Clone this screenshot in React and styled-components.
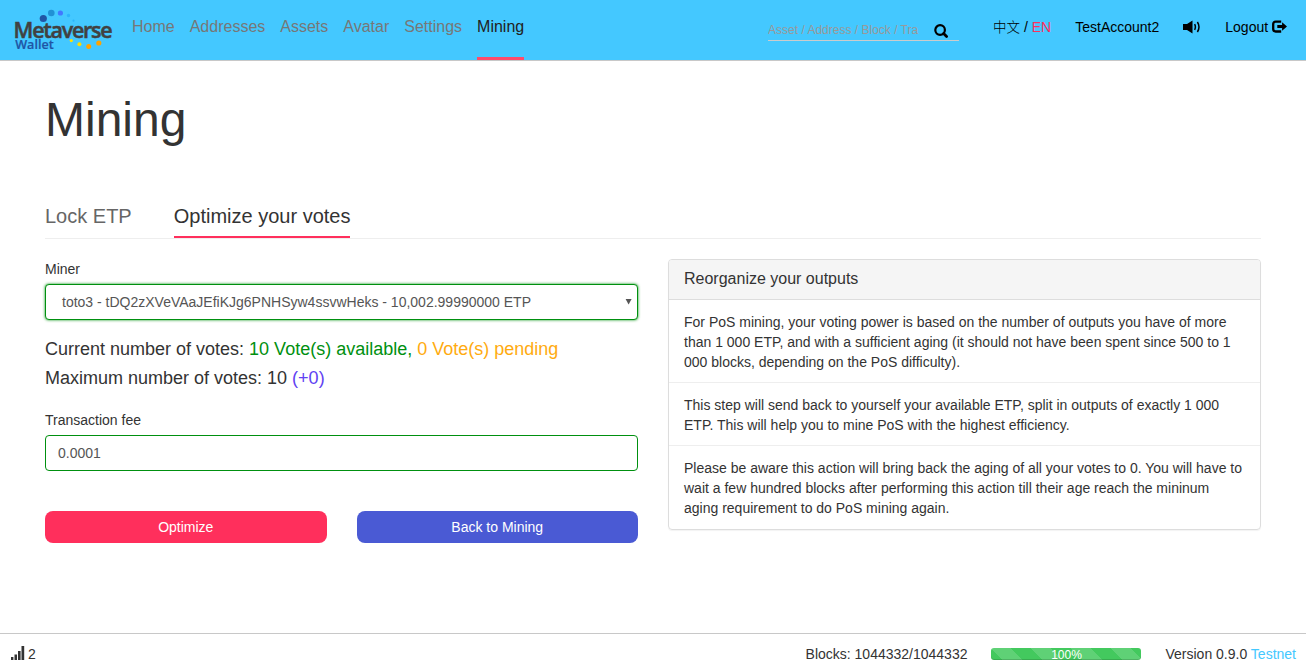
import React from "react";
import styled, { createGlobalStyle, css } from "styled-components";

const Global = createGlobalStyle`
  * { box-sizing: border-box; }
  html, body { margin: 0; padding: 0; background: #fff; }
  body {
    font: 14px/20px "Liberation Sans", Arial, "Noto Sans CJK SC", sans-serif;
    color: #333;
  }
  #root { height: 100vh; }
`;

const Page = styled.div`
  display: flex;
  flex-direction: column;
  height: 100vh;
  overflow: hidden;
`;

const Header = styled.header`
  display: flex;
  flex: none;
  height: 61px;
  padding-left: 10px;
  padding-right: 19px;
  background: #44c8ff;
  border-bottom: 1px solid #c8c8c8;
`;

const Logo = styled.svg`
  display: block;
  flex: none;
  width: 107px;
  height: 60px;
`;

const Nav = styled.nav`
  display: flex;
  gap: 15px;
  margin-left: 15px;
`;

const NavItem = styled.a`
  height: 60px;
  padding-top: 15px;
  font-size: 16px;
  line-height: 23px;
  color: ${(p) => (p.$active ? "#222" : "#777")};
  border-bottom: 3px solid ${(p) => (p.$active ? "#ff4a6b" : "transparent")};
`;

const SearchBox = styled.div`
  display: flex;
  align-items: center;
  width: 191px;
  height: 20px;
  margin: 21px 34px 0 auto;
  border-bottom: 1px solid #ccc;
`;

const SearchText = styled.span`
  flex: none;
  width: 151px;
  margin-right: 13.5px;
  overflow: hidden;
  white-space: nowrap;
  font-size: 12px;
  line-height: 17px;
  color: #999;
`;

const Tools = styled.div`
  display: flex;
  height: 24px;
  margin-top: 15px;
  line-height: 24px;
  color: #000;
  white-space: nowrap;
`;

const Tool = styled.span`
  display: flex;
  align-items: center;
  margin-right: ${(p) => p.$gap || 0}px;
`;

const Chinese = styled.span`
  font-family: "Noto Sans CJK SC", sans-serif;
  font-weight: 300;
  font-size: 13.5px;
  line-height: 1;
`;

const Accent = styled.span`
  color: ${(p) => p.$color};
`;

const Icon = styled.svg`
  display: block;
  flex: none;
  fill: currentColor;
`;

const Main = styled.main`
  flex: 1;
  padding: 32px 45px 0;
`;

const Title = styled.h1`
  margin: 0;
  font-size: 48px;
  line-height: 53px;
  font-weight: 400;
`;

const Tabs = styled.div`
  display: flex;
  gap: 42px;
  height: 38px;
  margin-top: 55px;
  border-bottom: 1px solid #eee;
`;

const Tab = styled.a`
  height: 37px;
  padding-top: 2px;
  font-size: 20px;
  line-height: 27px;
  color: ${(p) => (p.$active ? "#333" : "#666")};
  border-bottom: 2px solid ${(p) => (p.$active ? "#ff2f5c" : "transparent")};
`;

const Columns = styled.div`
  display: grid;
  grid-template-columns: 1fr 1fr;
  gap: 30px;
  align-items: start;
  margin-top: 20px;
`;

const Label = styled.label`
  display: block;
  margin-bottom: 5px;
`;

const field = css`
  display: flex;
  align-items: center;
  height: 36px;
  border: 1px solid #00900f;
  border-radius: 4px;
  color: #555;
  background: #fff;
`;

const SelectField = styled.div`
  ${field}
  justify-content: space-between;
  padding: 0 5px 0 16px;
  box-shadow: 0 0 3px #00900f;
`;

const InputField = styled.div`
  ${field}
  padding: 0 12px;
`;

const Votes = styled.div`
  margin: 15px 0 17px;
  font-size: 18px;
  line-height: 29px;
`;

const Buttons = styled.div`
  display: grid;
  grid-template-columns: 1fr 1fr;
  gap: 30px;
  margin-top: 40px;
`;

const Button = styled.button`
  height: 32px;
  padding: 0;
  border: 0;
  border-radius: 8px;
  font: inherit;
  color: #fff;
  background: ${(p) => p.$color};
`;

const Panel = styled.section`
  padding-bottom: 1px;
  border: 1px solid #ddd;
  border-radius: 4px;
  box-shadow: 0 1px 1px rgba(0, 0, 0, 0.05);
`;

const PanelHead = styled.h2`
  height: 40px;
  margin: 0;
  padding: 0 15px;
  border-bottom: 1px solid #ddd;
  border-radius: 3px 3px 0 0;
  font-size: 16px;
  line-height: 38px;
  font-weight: 400;
  background: #f5f5f5;
`;

const PanelText = styled.p`
  margin: 0;
  padding: 12px 15px 10px;
  & + & { border-top: 1px solid #eee; }
`;

const Footer = styled.footer`
  display: flex;
  flex: none;
  align-items: flex-start;
  height: 39px;
  padding: 10px 10px 0 11px;
  border-top: 1px solid #c8c8c8;
`;

const Peers = styled.span`
  display: flex;
  gap: 3px;
  margin-right: auto;
`;

const Signal = styled(Icon)`
  margin-top: 2px;
`;

const Progress = styled.div`
  width: 150px;
  height: 12px;
  margin: 4px 24px 0;
  border-radius: 3px;
  font-size: 12px;
  line-height: 14px;
  text-align: center;
  color: #fff;
  background: #43c95e linear-gradient(45deg, rgba(255,255,255,.15) 25%, transparent 25%, transparent 50%, rgba(255,255,255,.15) 50%, rgba(255,255,255,.15) 75%, transparent 75%) 0 0 / 40px 40px;
  box-shadow: inset 0 -1px 0 rgba(0, 0, 0, 0.15);
`;

const nav = ["Home", "Addresses", "Assets", "Avatar", "Settings", "Mining"];

const notes = [
  "For PoS mining, your voting power is based on the number of outputs you have of more than 1 000 ETP, and with a sufficient aging (it should not have been spent since 500 to 1 000 blocks, depending on the PoS difficulty).",
  "This step will send back to yourself your available ETP, split in outputs of exactly 1 000 ETP. This will help you to mine PoS with the highest efficiency.",
  "Please be aware this action will bring back the aging of all your votes to 0. You will have to wait a few hundred blocks after performing this action till their age reach the mininum aging requirement to do PoS mining again.",
];

function MetaverseLogo() {
  return (
    <Logo viewBox="10 0 107 60">
      <circle cx="43.3" cy="18.5" r="3.6" fill="#2055a5" />
      <circle cx="51.3" cy="13" r="3.3" fill="#2191d5" />
      <circle cx="60.4" cy="13" r="2.6" fill="#4278ff" />
      <circle cx="68.5" cy="15.5" r="1.7" fill="#2bb5fb" />
      <circle cx="73.5" cy="20.7" r="1.1" fill="#2bb5fb" />
      <text x="13.6" y="37.5" textLength="99" lengthAdjust="spacing" fontFamily="Open Sans" fontWeight="600" fontSize="21.5" fill="#414141" stroke="#414141" strokeWidth="0.5">Metaverse</text>
      <text x="15.2" y="48.8" textLength="38.5" lengthAdjust="spacingAndGlyphs" fontFamily="Open Sans" fontWeight="600" fontSize="12.5" fill="#2055a5" stroke="#2055a5" strokeWidth="0.2">Wallet</text>
      <circle cx="71.3" cy="40.6" r="1.6" fill="#ffe000" />
      <circle cx="79.4" cy="44.3" r="2" fill="#ffdc00" />
      <circle cx="88.7" cy="46.6" r="2.5" fill="#ffa200" />
      <circle cx="98.8" cy="43" r="2.6" fill="#ffa200" />
    </Logo>
  );
}

export default function App() {
  return (
    <Page>
      <Global />
      <Header>
        <MetaverseLogo />
        <Nav>
          {nav.map((n) => <NavItem key={n} $active={n === "Mining"}>{n}</NavItem>)}
        </Nav>
        <SearchBox>
          <SearchText>Asset / Address / Block / Tra</SearchText>
          <Icon width="16" height="16" viewBox="0 0 16 16">
            <circle cx="7.1" cy="7" r="4.8" fill="none" stroke="#000" strokeWidth="2.2" />
            <path d="M10.6 10.5l3 3" stroke="#000" strokeWidth="2.8" strokeLinecap="round" />
          </Icon>
        </SearchBox>
        <Tools>
          <Tool $gap={24}><span><Chinese>中文</Chinese> / <Accent $color="#ff2f5c">EN</Accent></span></Tool>
          <Tool $gap={24}>TestAccount2</Tool>
          <Tool $gap={24}>
            <Icon width="18" height="14" viewBox="0 0 18 14">
              <path d="M0 4h4l5.5-3.6v13.2L4 10H0z" />
              <path d="M11.6 4.2Q13.2 7 11.6 9.8M14.4 2Q17.6 7 14.4 12" fill="none" stroke="#000" strokeWidth="1.5" />
            </Icon>
          </Tool>
          <Tool>
            Logout&nbsp;
            <Icon width="15" height="14" viewBox="0 0 15 14">
              <path d="M9.2 1.7H3.7Q1.2 1.7 1.2 4.1v5q0 2.4 2.5 2.4h5.5" fill="none" stroke="#000" strokeWidth="2.3" />
              <path d="M5.3 5h4.8V2.2L15 6.5l-4.9 4.3V8H5.3z" />
            </Icon>
          </Tool>
        </Tools>
      </Header>
      <Main>
        <Title>Mining</Title>
        <Tabs>
          <Tab>Lock ETP</Tab>
          <Tab $active>Optimize your votes</Tab>
        </Tabs>
        <Columns>
          <div>
            <Label>Miner</Label>
            <SelectField>
              <span>toto3 - tDQ2zXVeVAaJEfiKJg6PNHSyw4ssvwHeks - 10,002.99990000 ETP</span>
              <Icon width="7" height="6" viewBox="0 0 7 6"><path d="M.6 0h6L3.6 5.6z" /></Icon>
            </SelectField>
            <Votes>
              <div>
                Current number of votes: <Accent $color="#00900f">10 Vote(s) available, </Accent>
                <Accent $color="#ffab0f">0 Vote(s) pending</Accent>
              </div>
              <div>Maximum number of votes: 10 <Accent $color="#6142f2">(+0)</Accent></div>
            </Votes>
            <Label>Transaction fee</Label>
            <InputField>0.0001</InputField>
            <Buttons>
              <Button $color="#ff2f5c">Optimize</Button>
              <Button $color="#4a5ad4">Back to Mining</Button>
            </Buttons>
          </div>
          <Panel>
            <PanelHead>Reorganize your outputs</PanelHead>
            {notes.map((t) => <PanelText key={t}>{t}</PanelText>)}
          </Panel>
        </Columns>
      </Main>
      <Footer>
        <Peers>
          <Signal width="14" height="14" viewBox="0 0 14 14">
            <path d="M0 11h2.4v3H0zM3.5 8.5h2.5V14H3.5zM7 5h2.6v9H7zM10.5 0h2.7v14h-2.7z" />
          </Signal>
          2
        </Peers>
        <span>Blocks: 1044332/1044332</span>
        <Progress>100%</Progress>
        <span>Version 0.9.0 <Accent $color="#44c8ff">Testnet</Accent></span>
      </Footer>
    </Page>
  );
}
